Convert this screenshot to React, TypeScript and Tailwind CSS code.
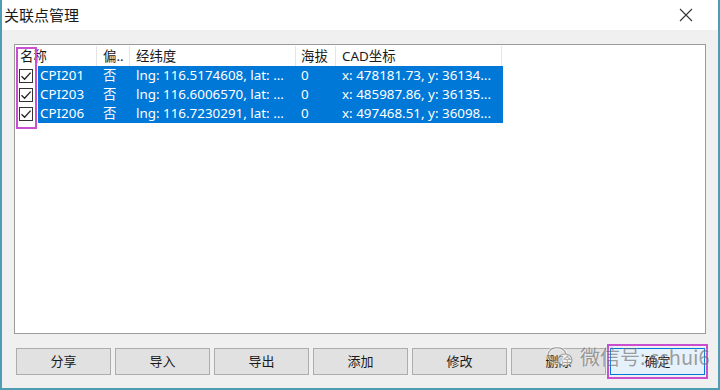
import React from 'react';

const rows = [
  { name: 'CPI201', off: '否', lnglat: 'lng: 116.5174608, lat: ...', alt: '0', cad: 'x: 478181.73, y: 36134...' },
  { name: 'CPI203', off: '否', lnglat: 'lng: 116.6006570, lat: ...', alt: '0', cad: 'x: 485987.86, y: 36135...' },
  { name: 'CPI206', off: '否', lnglat: 'lng: 116.7230291, lat: ...', alt: '0', cad: 'x: 497468.51, y: 36098...' },
];

const buttons = ['分享', '导入', '导出', '添加', '修改', '删除'];

function Check() {
  return (
    <div className="w-[14px] h-[14px] border border-[#333] bg-white flex items-center justify-center">
      <svg width="12" height="12" viewBox="0 0 12 12">
        <path d="M1.5 6.2 L4.6 9.2 L10.6 2.6" fill="none" stroke="#222" strokeWidth="1.3" />
      </svg>
    </div>
  );
}

export default function App() {
  const font = { fontFamily: '"Segoe UI", "Noto Sans", "Noto Sans CJK SC", sans-serif' };
  return (
    <div className="w-[720px] h-[390px] bg-[#f0f0f0] border-l-2 border-b-2 border-r-2 border-[#4f9db2] flex flex-col overflow-hidden text-[#1a1a1a] text-[13.4px]" style={font}>
      <div className="h-[30px] bg-white flex items-center justify-between pl-[2px] pr-[24px] shrink-0">
        <span className="text-[15px]" style={{ fontFamily: '"Noto Sans CJK SC", sans-serif' }}>关联点管理</span>
        <svg width="16" height="16" viewBox="0 0 16 16">
          <path d="M2 2 L14 14 M14 2 L2 14" stroke="#333" strokeWidth="1.1" />
        </svg>
      </div>
      <div className="flex-1 flex flex-col px-[12px] pt-[14px] pb-[12px]">
        <div className="relative h-[290px] bg-white border border-[#9a9a9a] pl-[1px] pt-[1px]">
          <div className="flex h-[20px] items-center w-[487px] bg-white">
            <div className="w-[81px] pl-[4px] border-r border-[#e5e5e5] h-full flex items-center">名称</div>
            <div className="w-[33px] pl-[6px] border-r border-[#e5e5e5] h-full flex items-center">偏..</div>
            <div className="w-[166px] pl-[6px] border-r border-[#e5e5e5] h-full flex items-center">经纬度</div>
            <div className="w-[40px] pl-[5px] border-r border-[#e5e5e5] h-full flex items-center">海拔</div>
            <div className="w-[166px] pl-[6px] border-r border-[#e5e5e5] h-full flex items-center">CAD坐标</div>
          </div>
          <div className="flex flex-col">
            {rows.map((r) => (
              <div key={r.name} className="flex h-[19px] items-center">
                <div className="w-[22px] flex items-center pl-[3px]">
                  <Check />
                </div>
                <div className="flex h-full items-center bg-[#0078d7] text-white w-[465px] whitespace-nowrap">
                  <div className="w-[59px] pl-[2px]">{r.name}</div>
                  <div className="w-[33px] pl-[6px]">{r.off}</div>
                  <div className="w-[166px] pl-[6px]">{r.lnglat}</div>
                  <div className="w-[40px] pl-[5px]">{r.alt}</div>
                  <div className="w-[166px] pl-[6px]">{r.cad}</div>
                </div>
              </div>
            ))}
          </div>
          <div className="absolute left-[1px] top-[2px] w-[21px] h-[82px] border-2 border-[#c94fd0]" />
        </div>
        <div className="flex gap-[4px] mt-[14px] pl-[2px]">
          {buttons.map((b) => (
            <div key={b} className="w-[95px] h-[27px] bg-[#e1e1e1] border border-[#adadad] flex items-center justify-center text-[13px]">
              {b}
            </div>
          ))}
          <div className="relative">
            <div className="w-[95px] h-[27px] bg-[#e5f1fb] border border-[#0078d7] flex items-center justify-center text-[13px]">
              确定
            </div>
            <div className="absolute -left-[3px] -top-[4px] w-[101px] h-[35px] border-2 border-[#c94fd0]" />
          </div>
        </div>
      </div>
      <div className="absolute left-[546px] top-[342px] flex items-center gap-[4px] text-[#666] opacity-60 text-[20px]" style={{ fontFamily: '"Noto Sans CJK SC", sans-serif' }}>
        <svg width="30" height="26" viewBox="0 0 30 26">
          <ellipse cx="11" cy="11" rx="9" ry="7.5" fill="none" stroke="#fff" strokeWidth="3" />
          <ellipse cx="11" cy="11" rx="9" ry="7.5" fill="none" stroke="#777" strokeWidth="1.2" />
          <ellipse cx="19" cy="16" rx="7" ry="6" fill="#fff" stroke="#777" strokeWidth="1.2" />
        </svg>
        <span className="[text-shadow:0_0_2px_#fff]">微信号: sshui6</span>
      </div>
    </div>
  );
}
